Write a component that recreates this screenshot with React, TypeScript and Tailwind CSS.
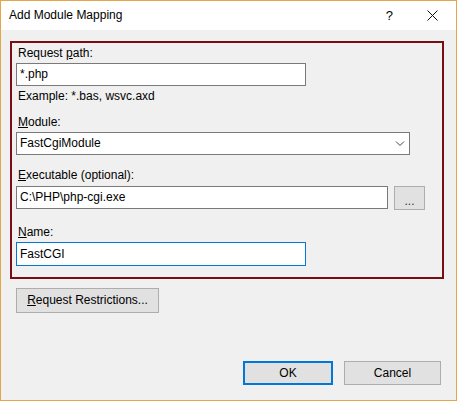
function Key({ children }: { children: string }) {
    return <u className="underline underline-offset-[1px] decoration-1">{children}</u>;
}

function TextBox({ value, width, focused = false }: { value: string; width: string; focused?: boolean }) {
    return (
        <div
            className={
                "h-[23px] bg-white border flex items-center pl-[3px] " +
                width +
                (focused ? " border-[#0078d7]" : " border-[#7a7a7a]")
            }
        >
            {value}
        </div>
    );
}

function Button({ label, className }: { label: React.ReactNode; className: string }) {
    return (
        <div className={"bg-[#e1e1e1] flex items-center justify-center " + className}>
            {label}
        </div>
    );
}

export default function App() {
    return (
        <div className="w-[457px] h-[401px] bg-[#f0f0f0] border border-[#e5a54a] flex flex-col font-['Liberation_Sans',Arial,sans-serif] text-[12px] leading-[15px] text-black">
            <div className="h-[29px] shrink-0 bg-white flex items-center">
                <span className="ml-[8px]">Add Module Mapping</span>
                <span className="ml-auto mr-[34px] text-[13px]">?</span>
                <svg width="11" height="11" viewBox="0 0 11 11" className="mr-[18px]">
                    <path d="M0.5 0.5 L10.5 10.5 M10.5 0.5 L0.5 10.5" stroke="#111" strokeWidth="1" />
                </svg>
            </div>

            <div className="flex flex-col flex-1 pl-[9px] pr-[12px] pt-[11px] pb-[15px]">
                <div className="h-[238px] border-2 border-[#7a0c16] flex flex-col pl-[4px]">
                    <span className="mt-[3px] ml-[2px]">
                        Request <Key>p</Key>ath:
                    </span>
                    <div className="mt-[2px]">
                        <TextBox value="*.php" width="w-[290px]" />
                    </div>
                    <span className="mt-[3px] ml-[2px]">Example: *.bas, wsvc.axd</span>

                    <span className="mt-[11px] ml-[2px]">
                        <Key>M</Key>odule:
                    </span>
                    <div className="mt-[2px] w-[394px] h-[23px] bg-white border border-[#7a7a7a] flex items-center pl-[3px]">
                        FastCgiModule
                        <svg width="10" height="6" viewBox="0 0 10 6" className="ml-auto mr-[4px]">
                            <polyline points="1,0.5 5,4.5 9,0.5" fill="none" stroke="#444" strokeWidth="1" />
                        </svg>
                    </div>

                    <span className="mt-[13px] ml-[2px]">
                        <Key>E</Key>xecutable (optional):
                    </span>
                    <div className="mt-[3px] flex items-start gap-[6px]">
                        <TextBox value="C:\PHP\php-cgi.exe" width="w-[372px]" />
                        <Button
                            label={<span className="mt-[6px] text-[#333]">...</span>}
                            className="w-[31px] h-[24px] border border-[#adadad]"
                        />
                    </div>

                    <span className="mt-[15px] ml-[2px]">
                        <Key>N</Key>ame:
                    </span>
                    <div className="mt-[2px]">
                        <div className="h-[24px] w-[290px] bg-white border border-[#0078d7] flex items-center pl-[3px]">
                            FastCGI
                        </div>
                    </div>
                </div>

                <Button
                    label={
                        <span>
                            <Key>R</Key>equest Restrictions...
                        </span>
                    }
                    className="mt-[9px] ml-[6px] w-[143px] h-[25px] border border-[#adadad]"
                />

                <div className="mt-auto flex justify-end gap-[11px] mr-[3px]">
                    <Button label="OK" className="w-[90px] h-[24px] border-2 border-[#0078d7]" />
                    <Button label="Cancel" className="w-[97px] h-[24px] border border-[#adadad]" />
                </div>
            </div>
        </div>
    );
}
